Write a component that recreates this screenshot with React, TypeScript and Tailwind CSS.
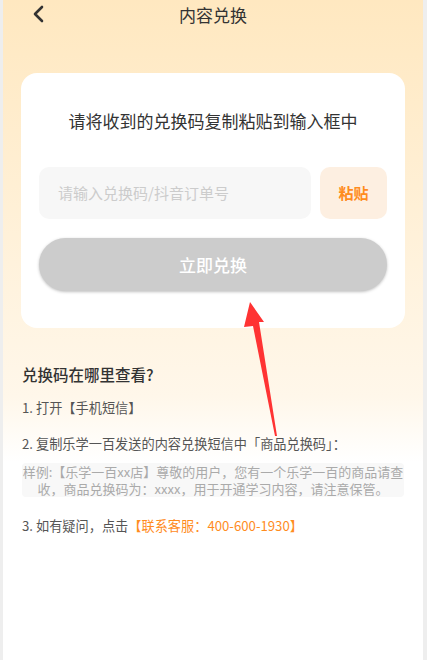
import React from "react";

const C = "\uFF0C";
const K = "\uFF1A";

export default function App() {
  const font = { fontFamily: '"Noto Sans CJK SC", "Noto Sans", sans-serif' };
  return (
    <div className="w-[427px] h-[660px] bg-[#eeeeee] flex" style={font}>
      <div className="relative ml-[3px] w-[420px] h-[660px] bg-gradient-to-b from-[#ffe8c0] via-[#fff7ea] via-60% to-white to-70% flex flex-col">
        <div className="h-[30px] flex items-center justify-center relative">
          <svg className="absolute left-[29px] top-[5px]" width="14" height="18" viewBox="0 0 14 18">
            <path d="M10 2 L3 9 L10 16" fill="none" stroke="#333" strokeWidth="2.6" strokeLinecap="round" strokeLinejoin="round" />
          </svg>
          <span className="text-[17px] text-[#333] leading-none mt-[-2px]">内容兑换</span>
        </div>
        <div className="mx-[18px] mt-[43px] h-[255px] bg-white rounded-[16px] px-[18px] flex flex-col">
          <div className="mt-[36px] text-center text-[17px] leading-[24px] text-[#333]">请将收到的兑换码复制粘贴到输入框中</div>
          <div className="mt-[34px] flex gap-[9px]">
            <div className="w-[272px] h-[52px] bg-[#f7f7f7] rounded-[10px] flex items-center pl-[19px] text-[15px] text-[#cccccc]">请输入兑换码/抖音订单号</div>
            <div className="w-[67px] h-[52px] bg-[#fdefe1] rounded-[10px] flex items-center justify-center text-[15px] font-bold text-[#ff8c1e]">粘贴</div>
          </div>
          <div className="mt-[19px] h-[53px] rounded-full bg-[#cccccc] shadow-[0_1px_3px_rgba(0,0,0,0.25)] flex items-center justify-center text-[17px] font-medium text-white">立即兑换</div>
        </div>
        <div className="px-[19px] mt-[35px]">
          <div className="text-[15.5px] leading-[22px] text-[#333] font-medium">兑换码在哪里查看?</div>
          <div className="mt-[14px] text-[13.2px] leading-[18px] text-[#555]">1. 打开【手机短信】</div>
          <div className="mt-[18px] text-[13.2px] leading-[18px] text-[#555]">{"2. 复制乐学一百发送的内容兑换短信中「商品兑换码」" + K}</div>
          <div className="mt-[10px] bg-[#f8f8f8] rounded-[4px] text-center text-[13px] leading-[17px] text-[#aaaaaa] px-0">
            {"样例:【乐学一百xx店】尊敬的用户" + C + "您有一个乐学一百的商品请查收" + C + "商品兑换码为" + K + "xxxx" + C + "用于开通学习内容" + C + "请注意保管。"}
          </div>
          <div className="mt-[20px] text-[13.2px] leading-[18px] text-[#555]">
            {"3. 如有疑问" + C + "点击"}
            <span className="text-[#ff8c1e]">{"【联系客服" + K + "400-600-1930】"}</span>
          </div>
        </div>
        <svg className="absolute left-0 top-0 pointer-events-none" width="420" height="660" viewBox="0 0 420 660">
          <polygon points="247,302 261,322 256,322 274,436 272,436 250,326 241,327" fill="#ff3333" />
        </svg>
      </div>
    </div>
  );
}
